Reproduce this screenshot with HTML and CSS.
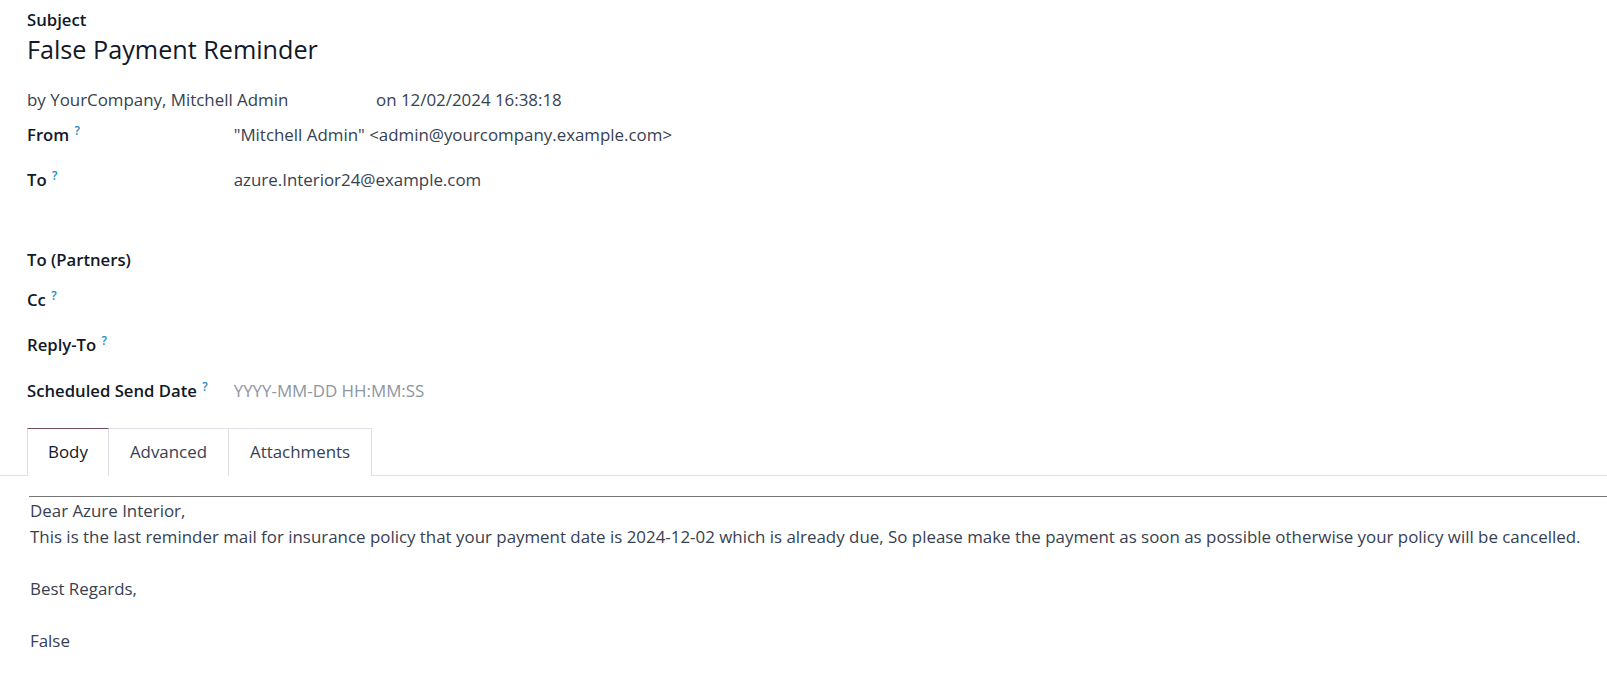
FILE: index.html
```html
<html>
<head>
    <title>False Payment Reminder</title>
    <link rel="stylesheet" href="styles.css">
</head>
<body>
    <div class="sheet">
        <div class="title-block">
            <div class="label">Subject</div>
            <h1 class="subject">False Payment Reminder</h1>
        </div>

        <div class="byline">
            <span class="author">by YourCompany, Mitchell Admin</span>
            <span class="date">on 12/02/2024 16:38:18</span>
        </div>

        <div class="fields">
            <div class="row row-from">
                <div class="label">From <sup class="help">?</sup></div>
                <div class="value">"Mitchell Admin" &lt;admin@yourcompany.example.com&gt;</div>
            </div>
            <div class="row row-to">
                <div class="label">To <sup class="help">?</sup></div>
                <div class="value">azure.Interior24@example.com</div>
            </div>
            <div class="row row-partners">
                <div class="label">To (Partners)</div>
                <div class="value"></div>
            </div>
            <div class="row row-cc">
                <div class="label">Cc <sup class="help">?</sup></div>
                <div class="value"></div>
            </div>
            <div class="row row-reply">
                <div class="label">Reply-To <sup class="help">?</sup></div>
                <div class="value"></div>
            </div>
            <div class="row row-date">
                <div class="label">Scheduled Send Date <sup class="help">?</sup></div>
                <div class="value placeholder">YYYY-MM-DD HH:MM:SS</div>
            </div>
        </div>
    </div>

    <div class="tabs">
        <div class="tab active">Body</div>
        <div class="tab">Advanced</div>
        <div class="tab">Attachments</div>
    </div>

    <div class="mail-body">
        <hr>
        <p>Dear Azure Interior,</p>
        <p>This is the last reminder mail for insurance policy that your payment date is 2024-12-02 which is already due, So please make the payment as soon as possible otherwise your policy will be cancelled.</p>
        <p>&nbsp;</p>
        <p>Best Regards,</p>
        <p>&nbsp;</p>
        <p>False</p>
    </div>
</body>
</html>
```

FILE: styles.css
```css
body {
    margin: 0;
    font-family: "Open Sans", "Noto Sans", sans-serif;
    font-size: 16.9px;
    line-height: 25px;
    color: #374151;
    background-color: white;
}

.sheet {
    padding: 7px 27px 0 27px;
}

.label {
    font-weight: 600;
    font-size: 16.7px;
    color: #111827;
}

.help {
    font-size: 12px;
    font-weight: 600;
    color: #1a8fbf;
    margin-left: 1px;
    vertical-align: 6px;
    line-height: 0;
}

.subject {
    margin: 0;
    font-size: 25.2px;
    font-weight: 400;
    line-height: 34px;
    color: #111827;
}

.byline {
    display: flex;
    margin-top: 21px;
    height: 35px;
}

.author {
    width: 349px;
}

.row {
    display: grid;
    grid-template-columns: 206.7px 1fr;
}

.row-from {
    height: 45px;
}

.row-to {
    height: 80px;
}

.row-partners {
    height: 40px;
}

.row-cc {
    height: 45px;
}

.row-reply {
    height: 46px;
}

.row-date {
    height: 50px;
}

.placeholder {
    color: #8d95a3;
}

.tabs {
    display: flex;
    padding-left: 27px;
    border-bottom: 1px solid #dee2e6;
}

.tab {
    padding: 10px 21px 11px 21px;
    border: 1px solid #dee2e6;
    border-bottom: none;
    margin-bottom: -1px;
    background-color: white;
}

.tab + .tab {
    margin-left: -1px;
}

.tab.active {
    border-top-color: #714b67;
    color: #111827;
    position: relative;
    z-index: 1;
    padding: 10px 20px 12px 20px;
}

.mail-body {
    padding: 20px 0 0 29px;
    white-space: nowrap;
    line-height: 26px;
}

.mail-body hr {
    margin: 0 0 1px 0;
    border: none;
    border-top: 1px solid #777777;
}

.mail-body p {
    margin: 0;
    padding-left: 1px;
}
```
